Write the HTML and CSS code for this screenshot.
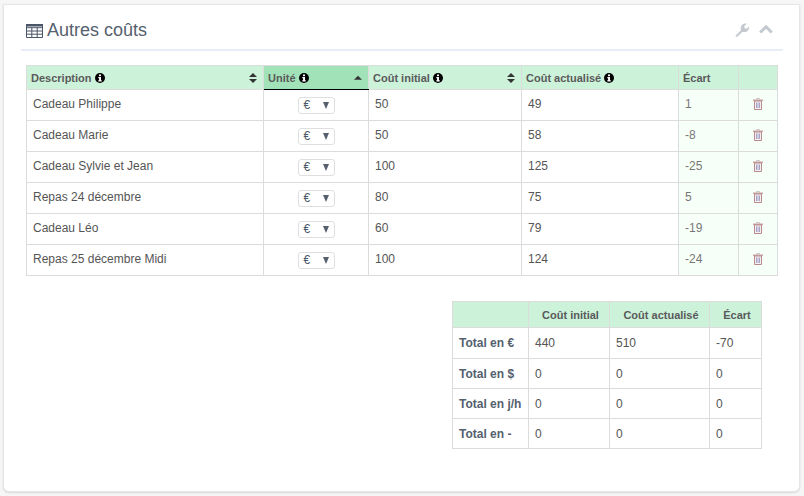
FILE: index.html
```html
<!DOCTYPE html>
<html lang="fr">
<head>
<meta charset="utf-8">
<title>Autres coûts</title>
<link rel="stylesheet" href="styles.css">
</head>
<body>
<svg class="defs" width="0" height="0" aria-hidden="true">
  <symbol id="info" viewBox="0 0 12 12">
    <circle cx="6" cy="6" r="6" fill="#000"/>
    <rect x="4.800" y="1.800" width="2.400" height="2" fill="#fff"/>
    <path d="M4 4.800h3.200v3.900h.9v1.500H4V8.700h.9V6.300H4z" fill="#fff"/>
  </symbol>
  <symbol id="trash" viewBox="0 0 10 12">
    <path d="M3.500 1.500V.5h3v1" fill="none" stroke="#c9c6c6"/>
    <rect x="0" y="1.500" width="10" height="1.500" fill="#c9a3a3"/>
    <path d="M1.500 3v8.500h7V3z" fill="#f4f1f6" stroke="#b98a8a"/>
    <path d="M3.500 4.500v5.500M5 4.500v5.500M6.500 4.500v5.500" stroke="#a9a3c6" stroke-width="1"/>
  </symbol>
</svg>
<main class="panel">
  <header class="panel-head">
    <h2 class="panel-title">
      <svg class="title-icon" viewBox="0 0 17 14" aria-hidden="true"><path d="M.5.500h16v13H.5zM.5 3.700h16M.5 7h16M.5 10.200h16M5.800 3.700v9.800M11.200 3.700v9.800" fill="none" stroke="#4a5568" stroke-width="1"/><rect x="0" y="0" width="17" height="2.500" fill="#4a5568"/></svg>
      Autres coûts
    </h2>
    <div class="tools">
      <svg class="tool-wrench" viewBox="0 0 14 14" aria-hidden="true"><path d="M1.200 13.600.4 12.800 6 7.200C5.300 5.200 5.800 3 7.400 1.600 8.600.5 10.300.2 11.800.7L9.200 3.200l.5 2 2 .6L14 3.200c.4 1.500 0 3.200-1.100 4.300-1.400 1.500-3.500 2-5.400 1.300L2.300 13.700c-.3.2-.8.2-1.100-.1z" fill="#c4c9cf"/></svg>
      <svg class="tool-chevron" viewBox="0 0 14 9" aria-hidden="true"><path d="M1.200 7.500 7 1.800l5.800 5.700" fill="none" stroke="#c4c9cf" stroke-width="3"/></svg>
    </div>
  </header>

  <table class="grid main-grid">
    <colgroup>
      <col class="c-desc"><col class="c-unit"><col class="c-init"><col class="c-act"><col class="c-ecart"><col class="c-del">
    </colgroup>
    <thead>
      <tr>
        <th><span class="th-in">Description <svg class="info"><use href="#info"/></svg><svg class="sort" viewBox="0 0 9 11"><path d="M4.500 0 9 4.500H0zM4.500 11 0 6.500h9z"/></svg></span></th>
        <th class="sorted"><span class="th-in">Unité <svg class="info"><use href="#info"/></svg><svg class="sort" viewBox="0 0 9 11"><path d="M4.500 3 9 7.500H0z"/></svg></span></th>
        <th><span class="th-in">Coût initial <svg class="info"><use href="#info"/></svg><svg class="sort" viewBox="0 0 9 11"><path d="M4.500 0 9 4.500H0zM4.500 11 0 6.500h9z"/></svg></span></th>
        <th><span class="th-in">Coût actualisé <svg class="info"><use href="#info"/></svg></span></th>
        <th class="plain">Écart</th>
        <th></th>
      </tr>
    </thead>
    <tbody>
      <tr><td>Cadeau Philippe</td><td class="unit"><span class="select">€<i class="caret"></i></span></td><td>50</td><td>49</td><td class="ecart">1</td><td class="del"><svg class="trash"><use href="#trash"/></svg></td></tr>
      <tr><td>Cadeau Marie</td><td class="unit"><span class="select">€<i class="caret"></i></span></td><td>50</td><td>58</td><td class="ecart">-8</td><td class="del"><svg class="trash"><use href="#trash"/></svg></td></tr>
      <tr><td>Cadeau Sylvie et Jean</td><td class="unit"><span class="select">€<i class="caret"></i></span></td><td>100</td><td>125</td><td class="ecart">-25</td><td class="del"><svg class="trash"><use href="#trash"/></svg></td></tr>
      <tr><td>Repas 24 décembre</td><td class="unit"><span class="select">€<i class="caret"></i></span></td><td>80</td><td>75</td><td class="ecart">5</td><td class="del"><svg class="trash"><use href="#trash"/></svg></td></tr>
      <tr><td>Cadeau Léo</td><td class="unit"><span class="select">€<i class="caret"></i></span></td><td>60</td><td>79</td><td class="ecart">-19</td><td class="del"><svg class="trash"><use href="#trash"/></svg></td></tr>
      <tr><td>Repas 25 décembre Midi</td><td class="unit"><span class="select">€<i class="caret"></i></span></td><td>100</td><td>124</td><td class="ecart">-24</td><td class="del"><svg class="trash"><use href="#trash"/></svg></td></tr>
    </tbody>
  </table>

  <table class="grid totals">
    <colgroup>
      <col class="t-label"><col class="t-init"><col class="t-act"><col class="t-ecart">
    </colgroup>
    <thead>
      <tr><th></th><th>Coût initial</th><th>Coût actualisé</th><th>Écart</th></tr>
    </thead>
    <tbody>
      <tr><th scope="row">Total en €</th><td>440</td><td>510</td><td>-70</td></tr>
      <tr><th scope="row">Total en $</th><td>0</td><td>0</td><td>0</td></tr>
      <tr><th scope="row">Total en j/h</th><td>0</td><td>0</td><td>0</td></tr>
      <tr><th scope="row">Total en -</th><td>0</td><td>0</td><td>0</td></tr>
    </tbody>
  </table>
</main>
</body>
</html>
```
FILE: styles.css
```css
* { box-sizing: border-box; }
html, body { margin: 0; height: 100%; }
body {
  background: #f6f6f6;
  padding: 4px 4px 4px 3px;
  font-family: "Liberation Sans", Arial, sans-serif;
  font-size: 12px;
  color: #555;
  overflow: hidden;
}
.defs { position: absolute; }
.panel {
  width: 797px;
  height: 488px;
  background: #fff;
  border: 1px solid #e6e6e6;
  border-radius: 0 0 6px 6px;
  box-shadow: 0 1px 2px rgba(0, 0, 0, .12);
  padding: 0 16px 0 17px;
}
.panel-head {
  display: flex;
  justify-content: space-between;
  align-items: center;
  height: 46px;
  border-bottom: 2px solid #e9edf8;
  padding: 7px 10px 0 5px;
}
.panel-title {
  margin: 0;
  display: flex;
  align-items: center;
  gap: 4px;
  font-size: 18px;
  font-weight: 400;
  color: #555f6e;
}
.title-icon { width: 17px; height: 14px; }
.tools { display: flex; align-items: center; gap: 10px; margin-top: -2px; }
.tool-wrench { width: 14px; height: 14px; }
.tool-chevron { width: 14px; height: 9px; }
.grid {
  border-collapse: collapse;
  table-layout: fixed;
  background: #fff;
}
.grid th, .grid td { border: 1px solid #dcdcdc; }
.main-grid { width: 751px; margin: 14px 0 0 5px; }
.c-desc { width: 237px; }
.c-unit { width: 105px; }
.c-init { width: 153px; }
.c-act { width: 157px; }
.c-ecart { width: 60px; }
.c-del { width: 39px; }
.main-grid thead th {
  height: 24px;
  padding: 0 4px;
  background: #cdf2da;
  text-align: left;
  font-size: 11px;
  font-weight: 700;
  color: #5a5a5a;
}
.main-grid thead th.sorted { background: #a2e2b8; border-bottom: 1px solid #000; }
.th-in { display: flex; align-items: center; gap: 3px; }
.info { width: 10px; height: 10px; }
.sort { width: 8px; height: 10px; margin-left: auto; margin-right: 2px; fill: #333; }
.main-grid tbody tr { height: 31px; }
.main-grid td { padding: 0 6px 2px; }
.main-grid td.unit { text-align: center; padding: 0; }
.select {
  display: inline-flex;
  align-items: center;
  justify-content: space-between;
  width: 37px;
  height: 17px;
  margin: 0;
  padding: 0 5px;
  border: 1px solid #dfdfdf;
  border-radius: 3px;
  font-size: 12px;
  color: #4a5a6a;
}
.caret {
  width: 0;
  height: 0;
  border-left: 3.500px solid transparent;
  border-right: 3.500px solid transparent;
  border-top: 7px solid #555f6e;
}
.main-grid td.ecart { background: #f7fff9; color: #777; }
.main-grid td.del { background: #f7fff9; text-align: center; padding: 0 1px 3px 0; }
.trash { width: 10px; height: 12px; display: inline-block; vertical-align: middle; }
.totals { width: 309px; margin: 25px 0 0 431px; }
.t-label { width: 76px; }
.t-init { width: 81px; }
.t-act { width: 100px; }
.t-ecart { width: 52px; }
.totals thead tr { height: 26px; }
.totals thead th {
  background: #cdf2da;
  font-size: 11px;
  font-weight: 700;
  color: #5a5a5a;
  text-align: center;
  padding: 0 0 0 3px;
}
.totals tbody tr { height: 30px; }
.totals tbody tr:first-child { height: 31px; }
.totals tbody th { text-align: left; padding: 0 6px; font-size: 12px; font-weight: 700; color: #555f6e; white-space: nowrap; }
.totals td { padding: 0 6px; }
```
